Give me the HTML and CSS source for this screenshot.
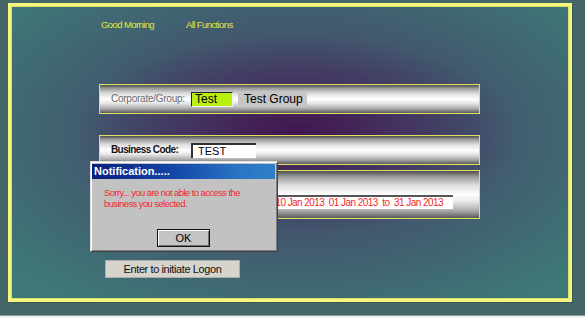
FILE: index.html
```html
<!DOCTYPE html>
<html>
<head>
<meta charset="utf-8">
<link rel="stylesheet" href="styles.css">
</head>
<body>
<div class="frame">
  <div class="nav">
    <span class="nav-link">Good Morning</span>
    <span class="nav-link">All Functions</span>
  </div>
  <div class="panel panel-corp">
    <span class="label label-gray">Corporate/Group:</span>
    <span class="field field-green">Test</span>
    <span class="field field-gray">Test Group</span>
  </div>
  <div class="panel panel-biz">
    <span class="label label-bold">Business Code:</span>
    <span class="field field-white">TEST</span>
  </div>
  <div class="panel panel-period">
    <div class="period-box"><span>Period 2013-10 Jan 2013&nbsp; 01 Jan 2013&nbsp; to&nbsp; 31 Jan 2013</span></div>
  </div>
  <button class="logon">Enter to initiate Logon</button>

  <div class="dialog">
    <div class="dialog-title">Notification.....</div>
    <div class="dialog-msg">Sorry... you are not able to access the<br>business you selected.</div>
    <div class="dialog-actions"><button class="ok">OK</button></div>
  </div>
</div>
<div class="bottom-line"></div>
</body>
</html>
```

FILE: styles.css
```css
html, body {
  margin: 0;
  padding: 0;
}
body {
  width: 585px;
  height: 318px;
  background: #456767;
  font-family: "Liberation Sans", Arial, sans-serif;
  overflow: hidden;
  position: relative;
}
.frame {
  position: relative;
  box-sizing: border-box;
  margin: 3px 0 0 8px;
  width: 564px;
  height: 299px;
  border: 3px solid #f6f67e;
  box-shadow: inset 0 0 0 1px #d8e070, 1px 1px 0 #3a5656;
  padding: 13px 0 0 88px;
  background:
    radial-gradient(ellipse 220px 100px at 285px 128px, rgba(66, 18, 78, 0.95) 0%, rgba(68, 30, 84, 0.6) 45%, rgba(70, 50, 95, 0) 100%),
    radial-gradient(ellipse 420px 230px at 285px 128px, #43456a 0%, #42586e 45%, #3e7676 85%, #3e7b79 100%);
}
.nav {
  display: flex;
  margin-left: 2px;
  height: 12px;
}
.nav-link {
  color: #e4e640;
  font-size: 9.5px;
  line-height: 12px;
  letter-spacing: -0.6px;
  white-space: nowrap;
}
.nav-link + .nav-link {
  margin-left: 32px;
}
.panel {
  box-sizing: border-box;
  width: 381px;
  border: 1px solid #e0e064;
  display: flex;
  align-items: center;
  padding-left: 11px;
  background: linear-gradient(to bottom, #4c4c4c 0%, #9a9a9a 12%, #dcdcdc 30%, #ffffff 50%, #e8e8e8 65%, #a8a8a8 85%, #5a5a5a 100%);
}
.panel-corp {
  margin-top: 53px;
  height: 30px;
}
.panel-biz {
  margin-top: 21px;
  height: 30px;
}
.panel-period {
  margin-top: 5px;
  height: 49px;
  align-items: flex-start;
  padding-top: 24px;
}
.label {
  width: 80px;
  font-size: 10px;
  line-height: 12px;
  white-space: nowrap;
}
.label-gray {
  color: #6a6a6a;
  letter-spacing: -0.25px;
}
.label-bold {
  color: #111;
  font-weight: bold;
  letter-spacing: -0.6px;
}
.field {
  box-sizing: border-box;
  height: 15px;
  font-size: 12px;
  line-height: 13px;
  color: #000;
  white-space: nowrap;
}
.field-green {
  width: 42px;
  background: #b8ee10;
  border: 1px solid #222;
  border-right-color: #eee;
  border-bottom-color: #eee;
  padding-left: 3px;
}
.field-gray {
  width: 69px;
  margin-left: 5px;
  background: #c6c6c6;
  padding-left: 6px;
  line-height: 15px;
}
.field-white {
  width: 65px;
  background: #fff;
  border-top: 2px solid #333;
  border-left: 2px solid #333;
  padding-left: 5px;
  font-size: 11px;
  line-height: 13px;
}
.period-box {
  box-sizing: border-box;
  margin-left: 80px;
  width: 262px;
  height: 14px;
  background: #fff;
  border-top: 2px solid #555;
  border-left: 2px solid #555;
  display: flex;
  justify-content: flex-end;
  overflow: hidden;
  padding-right: 10px;
}
.period-box span {
  white-space: nowrap;
  color: #f02828;
  font-size: 10px;
  line-height: 12px;
  letter-spacing: -0.55px;
}
.logon {
  display: block;
  box-sizing: border-box;
  margin: 41px 0 0 6px;
  width: 135px;
  height: 18px;
  padding: 0;
  border: 1px solid #a8b0a8;
  background: #d6d4cc;
  color: #111;
  font-family: "Liberation Sans", Arial, sans-serif;
  font-size: 11px;
  letter-spacing: -0.4px;
  line-height: 16px;
}
.dialog {
  position: absolute;
  left: 79px;
  top: 155px;
  box-sizing: border-box;
  width: 188px;
  height: 91px;
  background: #c2c2c2;
  border: 1px solid #404040;
  border-top-color: #e0e0e0;
  border-left-color: #e0e0e0;
  box-shadow: inset 1px 1px 0 #fff, inset -1px -1px 0 #808080;
  padding: 2px 2px 0 1px;
}
.dialog-title {
  height: 15px;
  background: linear-gradient(to right, #0a1e80 0%, #1448a8 45%, #2a74c4 80%, #3080c8 100%);
  color: #fff;
  font-weight: bold;
  font-size: 11px;
  line-height: 15px;
  padding-left: 2px;
}
.dialog-msg {
  margin: 8px 0 0 12px;
  color: #f02828;
  font-size: 9.5px;
  line-height: 11px;
  letter-spacing: -0.6px;
}
.dialog-actions {
  display: flex;
  padding: 20px 0 0 65px;
}
.ok {
  box-sizing: border-box;
  width: 53px;
  height: 18px;
  padding: 0;
  background: #c4c4c4;
  border: 1px solid #111;
  box-shadow: inset 1px 1px 0 #fff, inset -1px -1px 0 #707070;
  font-family: "Liberation Sans", Arial, sans-serif;
  font-size: 11px;
  color: #000;
}
.bottom-line {
  position: absolute;
  left: 0;
  top: 315px;
  width: 585px;
  height: 3px;
  background: #f0f0f0;
  border-top: 1px solid #8a9a9a;
}
```
